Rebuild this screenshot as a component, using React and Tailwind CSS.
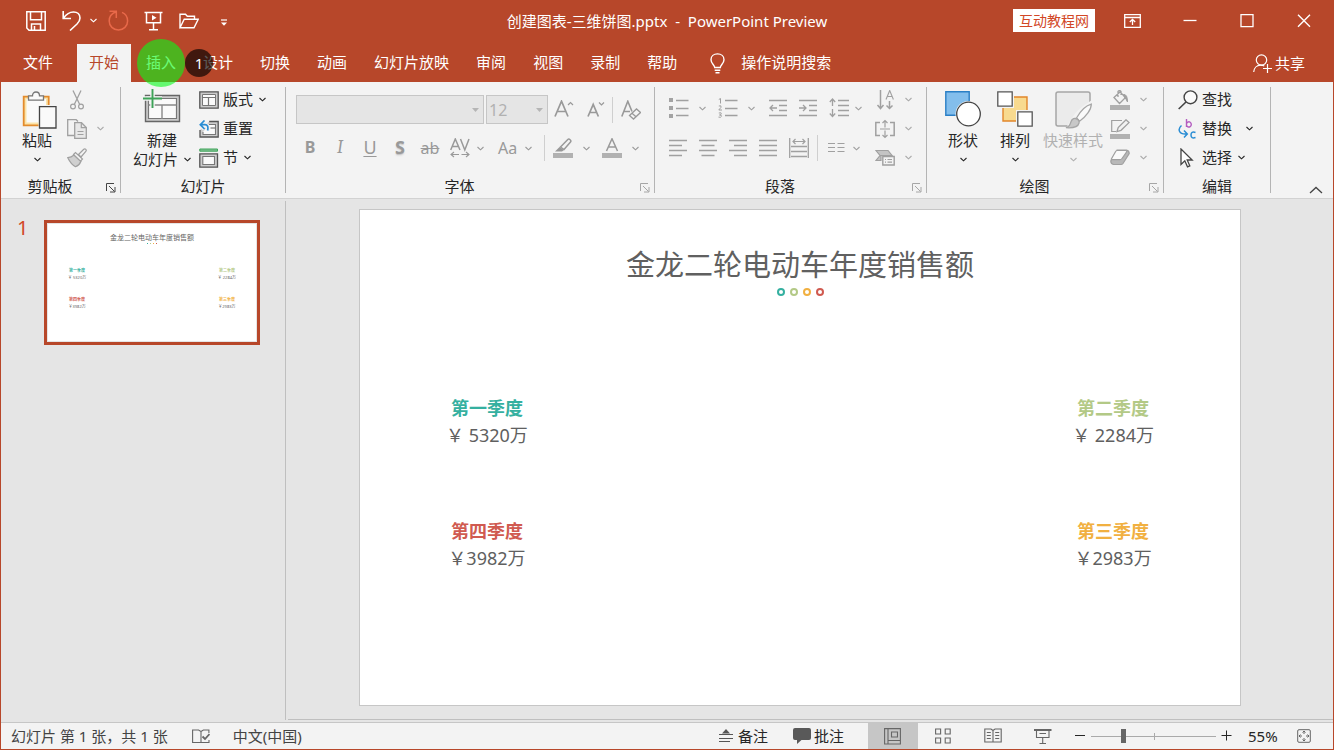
import React, { useState } from 'react'

const Svg = ({ w, h, className = '', children }) => (
  <svg
    width={w}
    height={h}
    viewBox={`0 0 ${w} ${h}`}
    fill="none"
    stroke="currentColor"
    aria-hidden="true"
    className={`shrink-0 ${className}`}
  >
    {children}
  </svg>
)

const Chevron = ({ className = '' }) => (
  <Svg w={7} h={5} className={className}>
    <path d="M.5 1 3.500 3.800 6.500 1" strokeWidth="1.1" />
  </Svg>
)

// quick access toolbar
const SaveIcon = () => (
  <Svg w={20} h={20}>
    <path d="M.8.8h18.4v18.4H3L.8 17zM4.5.8v8h11v-8M5.500 19v-6h9v6M8.500 19v-4" strokeWidth="1.5" />
  </Svg>
)
const UndoIcon = () => (
  <Svg w={19} h={21}>
    <path d="M1.2 1v7.500H9M1.500 8.200C4 4.500 7.500 2 11.500 2c4 0 6.500 2.500 6.500 6 0 2.500-1 4-3 6l-7 6.500" strokeWidth="1.6" />
  </Svg>
)
const RedoIcon = () => (
  <Svg w={21} h={21} className="text-[#e8694a]">
    <path d="M1.500 1.200h6.800v6.800M8 1.800C4 3.300 1.200 6.500 1.200 11c0 5 4 9 9.200 9s9.200-4 9.200-9c0-4-2.200-7.200-5.600-8.600" strokeWidth="1.5" />
  </Svg>
)
const ShowIcon = () => (
  <Svg w={19} h={20}>
    <path d="M.5 1.500h18M2.500 1.500v10.300h14V1.500M9.500 12v6.500M5 18.700h9" strokeWidth="1.5" />
    <path d="M8 4v5.500l4.500-2.700z" fill="currentColor" stroke="none" />
  </Svg>
)
const OpenIcon = () => (
  <Svg w={20} h={16}>
    <path d="M1 14.500V1.200h5.500l1.800 2h7.200v3M1 14.800 5.200 6.200h14L15 14.800z" strokeWidth="1.4" />
  </Svg>
)
const CustomizeIcon = () => (
  <Svg w={6} h={7}>
    <path d="M0 1h6" strokeWidth="1.2" />
    <path d="M0 3.500h6L3 6.700z" fill="currentColor" stroke="none" />
  </Svg>
)

// window controls
const RibbonDisplayIcon = () => (
  <Svg w={17} h={14}>
    <path d="M.7.7h15.600v12.600H.7zM.7 3.500h15.600M8.500 11V5.500M5.800 8l2.700-2.700L11.200 8" strokeWidth="1.3" />
  </Svg>
)
const MinimizeIcon = () => <Svg w={14} h={14}><path d="M.5 6.500h13" strokeWidth="1.3" /></Svg>
const MaximizeIcon = () => <Svg w={14} h={14}><path d="M1 .7h12v12H1z" strokeWidth="1.3" /></Svg>
const CloseIcon = () => <Svg w={14} h={14}><path d="m1 .7 12 12M13 .7l-12 12" strokeWidth="1.400" /></Svg>
const BulbIcon = () => (
  <Svg w={15} h={21}>
    <path d="M4.700 14.500c0-2.500-3.700-4-3.700-7.800C1 3.300 3.800.9 7.500.9S14 3.300 14 6.700c0 3.800-3.700 5.300-3.700 7.800zM4.700 17.200h5.600M5.500 19.700h4" strokeWidth="1.400" />
  </Svg>
)
const ShareIcon = () => (
  <Svg w={19} h={19}>
    <circle cx="8.500" cy="6" r="5.200" strokeWidth="1.200" />
    <path d="M.7 18c.3-4 3-6.800 7-6.800 1.500 0 2.600.3 3.600.8M14.500 10v9M10 14.500h9" strokeWidth="1.200" />
  </Svg>
)

// ribbon icons
const PasteIcon = () => (
  <Svg w={36} h={38}>
    <path d="M1.700 5.700h25v28.600h-25z" fill="#fbe3a8" stroke="#e38b2c" strokeWidth="1.800" />
    <path d="M4.500 8h19.500v23.500H4.500z" fill="#fafafa" stroke="none" />
    <path d="M6.500 9.200V4.800h4C10.500 2.300 12 1 14 1s3.500 1.300 3.500 3.800h4v4.400z" fill="#fafafa" stroke="#777" strokeWidth="1.300" />
    <path d="M16.500 14h19v24h-19z" fill="#f3f3f3" stroke="none" />
    <path d="M17.500 15.700h16.500v21.300H17.500z" fill="#fafafa" stroke="#444" strokeWidth="1.300" />
  </Svg>
)
const CutIcon = () => (
  <Svg w={20} h={20}>
    <path d="M6 .5 12.700 14.500M14 .5 7.300 14.500" strokeWidth="1.300" />
    <circle cx="6" cy="16.500" r="2.400" strokeWidth="1.200" />
    <circle cx="14" cy="16.500" r="2.400" strokeWidth="1.200" />
  </Svg>
)
const CopyIcon = () => (
  <Svg w={20} h={20}>
    <path d="M7 16.500H.7V.7h8.500L11 2.500" strokeWidth="1.300" />
    <path d="M7.700 3.700h6.800l4.800 4.800v10.800H7.700z" fill="#e8e8e8" strokeWidth="1.300" />
    <path d="M14.300 3.700v5h5M10.500 12.500h6M10.500 15.500h6" strokeWidth="1.200" />
  </Svg>
)
const BrushIcon = () => (
  <Svg w={20} h={20}>
    <path d="M7 7C5 8.800 3 9.500.8 9.700c2 4.300 5 7.500 7.700 9 2.800-1 4.500-3 5.500-5.500z" fill="#d0d0d0" strokeWidth="1.200" />
    <path d="m6.500 6.500 2-2 7 6.500-2 2.200z" fill="#f3f3f3" strokeWidth="1.200" />
    <path d="m11.500 6.500 5.300-5.200q1-1 2 0t0 2L14 9z" fill="#f3f3f3" strokeWidth="1.200" />
  </Svg>
)
const NewSlideIcon = () => (
  <Svg w={40} h={36}>
    <path d="M3.500 7.500h34v26h-34z" fill="#ccc" stroke="#666" strokeWidth="1.400" />
    <path d="M6.500 10.500h28v20h-28z" fill="#fafafa" stroke="#777" strokeWidth="1.200" />
    <path d="M6.500 17h28M20 17v14" stroke="#888" strokeWidth="1.400" />
    <path d="M10.500 1v19M1 10.500h19" stroke="#f3f3f3" strokeWidth="4.500" />
    <path d="M10.500 1v19M1 10.500h19" stroke="#3ea358" strokeWidth="1.900" />
  </Svg>
)
const LayoutIcon = () => (
  <Svg w={20} h={18} className="text-[#555]">
    <path d="M.8.8h18.400v16.400H.8z" fill="#ccc" strokeWidth="1.300" />
    <path d="M3.500 3.500h13v11h-13z" fill="#fafafa" stroke="#777" strokeWidth="1" />
    <path d="M3.500 6.500h13M9.500 6.500v8" stroke="#777" strokeWidth="1.200" />
  </Svg>
)
const ResetIcon = () => (
  <Svg w={20} h={18} className="text-[#555]">
    <path d="M1 10v7h18.200V1.500h-9" fill="#ccc" strokeWidth="1.300" />
    <path d="M4 12v2.500h12.500V4.500H10" fill="#fafafa" stroke="#777" strokeWidth="1.100" />
    <path d="M11.500 8h5" stroke="#777" strokeWidth="1.200" />
    <path d="M5.500.5 1.300 4.700 5.500 9M1.500 4.700H6c2.500 0 3.500 2 2.600 5.800" stroke="#f3f3f3" strokeWidth="4" />
    <path d="M5.500.5 1.300 4.700 5.500 9M1.500 4.700H6c2.500 0 3.500 2 2.600 5.800" stroke="#2a8dd4" strokeWidth="1.700" />
  </Svg>
)
const SectionIcon = () => (
  <Svg w={20} h={20} className="text-[#555]">
    <path d="M.8 1h17.700v2.200H.8z" fill="#7fc392" stroke="#3ea358" strokeWidth="1" />
    <path d="M.8 5.800h17.700v13.400H.8z" fill="#ccc" strokeWidth="1.300" />
    <path d="M3.800 8.500h11.700v8H3.800z" fill="#fafafa" stroke="#777" strokeWidth="1.100" />
  </Svg>
)

const GrowFontIcon = () => (
  <Svg w={20} h={20}>
    <path d="M1 16.500 7.500 1.200 14 16.500M3.300 11.500h8.400" strokeWidth="1.700" />
    <path d="m14 5 2.500-2.500L19 5" strokeWidth="1.200" />
  </Svg>
)
const ShrinkFontIcon = () => (
  <Svg w={20} h={20}>
    <path d="M2 16.500 7.200 4.500l5.200 12M4 12.500h6.500" strokeWidth="1.700" />
    <path d="m13 2.500 2.500 2.500L18 2.500" strokeWidth="1.200" />
  </Svg>
)
const ClearFormatIcon = () => (
  <Svg w={20} h={20}>
    <path d="M.8 16.500 6.800 1.300 11 11.500M3 11.500h6" strokeWidth="1.600" />
    <path d="m8.500 15.500 7-6.500 4 3.500-7 6.500zM11 13.200l4 3.500" fill="#f3f3f3" strokeWidth="1.300" />
  </Svg>
)
const SpacingIcon = () => (
  <Svg w={20} h={20}>
    <path d="m.7 12 4.600-11L10 12M2.300 8.500h6M10.500 1l4.300 11L19 1" strokeWidth="1.500" />
    <path d="M1 16.500h8M11.500 16.500H19M4 14 1 16.500 4 19M16 14l3 2.500-3 2.500" strokeWidth="1.100" />
  </Svg>
)
const HighlightIcon = () => (
  <Svg w={20} h={20}>
    <path d="m7.500 9 7.300-7.500c1.300-1.300 4 1 2.700 2.500L11 11.500z" strokeWidth="1.500" />
    <path d="M2 13.500 6.500 9l4.500 3-2 1.500z" fill="currentColor" stroke="none" />
    <path d="M0 15h20v5H0z" fill="#b1b1b1" stroke="none" />
  </Svg>
)
const FontColorIcon = () => (
  <Svg w={20} h={20}>
    <path d="M4.500 13 10 .8 15.500 13M6.300 9h7.400" strokeWidth="1.500" />
    <path d="M0 15h20v5H0z" fill="#b1b1b1" stroke="none" />
  </Svg>
)

const BulletsIcon = () => (
  <Svg w={20} h={20}>
    <path d="M0 0h4v4H0zM0 8h4v4H0zM0 16h4v4H0z" fill="#a3a3a3" stroke="none" />
    <path d="M7 2.500h12.500M7 10.500h12.500M7 17.500h12.500" strokeWidth="1.400" />
  </Svg>
)
const NumberingIcon = () => (
  <Svg w={20} h={20}>
    <path d="M.8 1.500 2.500.5v5M.8 8q3-1 2.200 1.300L.8 12H4M.8 15q3-.8 2.500.8Q3 17 1.500 17q2.300 0 2 1.300-.5 1.500-3 .8" strokeWidth="1" />
    <path d="M7 2.500h12.500M7 10.500h12.500M7 17.500h12.500" strokeWidth="1.400" />
  </Svg>
)
const OutdentIcon = () => (
  <Svg w={18} h={18}>
    <path d="M0 1.500h18M10 6.500h8M10 11.500h8M0 16.500h18" strokeWidth="1.500" />
    <path d="M8 9H1M4 6 1 9l3 3" strokeWidth="1.300" />
  </Svg>
)
const IndentIcon = () => (
  <Svg w={18} h={18}>
    <path d="M0 1.500h18M10 6.500h8M10 11.500h8M0 16.500h18" strokeWidth="1.500" />
    <path d="M0 9h7M4 6l3 3-3 3" strokeWidth="1.300" />
  </Svg>
)
const LineSpacingIcon = () => (
  <Svg w={20} h={20}>
    <path d="M3.500 1v7M3.500 11v7.500M.8 4l2.700-3L6.200 4M.8 15.500l2.700 3 2.700-3" strokeWidth="1.300" />
    <path d="M9 2.500h11M9 7.500h11M9 12.500h11M9 17.500h11" strokeWidth="1.500" />
  </Svg>
)
const AlignLeftIcon = () => <Svg w={18} h={18}><path d="M0 1.500h18M0 6.500h13M0 11.500h18M0 16.500h13" strokeWidth="1.500" /></Svg>
const AlignCenterIcon = () => <Svg w={18} h={18}><path d="M0 1.500h18M2.500 6.500h13M0 11.500h18M2.500 16.500h13" strokeWidth="1.500" /></Svg>
const AlignRightIcon = () => <Svg w={18} h={18}><path d="M0 1.500h18M5 6.500h13M0 11.500h18M5 16.500h13" strokeWidth="1.500" /></Svg>
const JustifyIcon = () => <Svg w={18} h={18}><path d="M0 1.500h18M0 6.500h18M0 11.500h18M0 16.500h18" strokeWidth="1.500" /></Svg>
const DistributeIcon = () => (
  <Svg w={20} h={20}>
    <path d="M.7 0v20M19.300 0v20" strokeWidth="1.300" />
    <path d="M4 3.500h12M6.500 1 4 3.500 6.500 6M13.500 1 16 3.500 13.500 6" strokeWidth="1.200" />
    <path d="M2 8.500h16M2 13.500h16M2 18.500h16" strokeWidth="1.500" />
  </Svg>
)
const ColumnsIcon = () => (
  <Svg w={17} h={12}>
    <path d="M0 1.500h7M9.500 1.500h7M0 5.500h7M9.500 5.500h7M0 9.500h7M9.500 9.500h7" strokeWidth="1.200" />
  </Svg>
)
const TextDirectionIcon = () => (
  <Svg w={20} h={20}>
    <path d="M5.500 0v18M2.500 15l3 3.500 3-3.500M14.500 11v7.500M11.500 15.500l3 3 3-3" strokeWidth="1.500" />
    <path d="m11 9.500 3.700-9 3.700 9M12.300 6.500h4.800" strokeWidth="1.100" />
  </Svg>
)
const AlignTextIcon = () => (
  <Svg w={20} h={20}>
    <path d="M5 3.500H.8v13H5M15 3.500h4.200v13H15" strokeWidth="1.500" />
    <path d="M5 10h10M10 8.500V1.500M10 11.500v7M7.500 4 10 1.500 12.500 4M7.500 16l2.500 2.500 2.500-2.500" strokeWidth="1.200" />
  </Svg>
)
const SmartArtIcon = () => (
  <Svg w={20} h={17}>
    <path d="M1 1.500h12l4 5H6v5H1l4-5z" fill="#c4c4c4" strokeWidth="1.200" />
    <path d="M7.800 7.500h11.400v8.500H7.800z" fill="#f3f3f3" strokeWidth="1.400" />
    <path d="M10 10.500h1M12.500 10.500H17M10 13.200h1M12.500 13.200H17" strokeWidth="1.200" />
  </Svg>
)

const ShapesIcon = () => (
  <Svg w={36} h={36}>
    <path d="M.8.8h23.400v23.400H.8z" fill="#83beec" stroke="#2a7fc5" strokeWidth="1.400" />
    <circle cx="23.500" cy="23" r="13" fill="#f3f3f3" stroke="none" />
    <circle cx="23.500" cy="23" r="11.800" fill="#fff" stroke="#444" strokeWidth="1.300" />
  </Svg>
)
const ArrangeIcon = () => (
  <Svg w={36} h={36}>
    <path d="M6 6h24v24H6z" fill="#f8da8f" stroke="#e2862a" strokeWidth="1.400" />
    <path d="M0 0h17v17H0zM19 19h17v17H19z" fill="#f3f3f3" stroke="none" />
    <path d="M.8.8h14.400v14.400H.8zM20.800 20.800h14.400v14.400H20.800z" fill="#fff" stroke="#555" strokeWidth="1.300" />
  </Svg>
)
const QuickStyleIcon = () => (
  <Svg w={38} h={38} className="text-[#a6a6a6]">
    <path d="M4 1h30q2 0 2 2v30q0 2-2 2H4q-2 0-2-2V3q0-2 2-2z" fill="#ebebeb" strokeWidth="1.500" />
    <path d="M20 24C25 17 31 14 38 9v28H12z" fill="#f3f3f3" stroke="none" />
    <path d="M22.500 27C26 21 32 14.500 37.300 13.200c0 5.300-5 12.300-11.800 17z" fill="#fafafa" strokeWidth="1.300" />
    <path d="M21.500 27.500c2.500.5 4 2 3.500 4.500-.8 3.500-4.500 5.300-13 4.700 3.500-1.500 4-3 5-6 .8-2.200 2.500-3.500 4.500-3.200z" fill="#c8c8c8" strokeWidth="1.300" />
  </Svg>
)
const FillIcon = () => (
  <Svg w={20} h={20}>
    <path d="M4 7.500 10 2l5.500 5.500-6 6zM8 7V1.500q1.500-1.800 3 0V5" strokeWidth="1.300" />
    <path d="M13.500 4.500q4-.5 4 7.500-1.500-3.500-3-4.500z" fill="currentColor" strokeWidth="1" />
    <path d="M0 15h20v5H0z" fill="#b1b1b1" stroke="none" />
  </Svg>
)
const OutlineIcon = () => (
  <Svg w={20} h={20}>
    <path d="M12 1.500H1.700v11H6" strokeWidth="1.200" />
    <path d="m7 12.500 1.200-4L16 .8l3 2.800-8 7.700z" strokeWidth="1.300" />
    <path d="M0 15h20v5H0z" fill="#b1b1b1" stroke="none" />
  </Svg>
)
const EffectsIcon = () => (
  <Svg w={20} h={17}>
    <path d="M7 1.200h9.500q2.700.5 2.700 3.300L13 14.500q-.8 1-2 1H3.500Q.8 15 .8 12z" fill="#b8b8b8" strokeWidth="1.200" />
    <path d="M7 1.500h8.500q2 0 1 1.700L12 9.500q-.8 1.200-2 1.200H2q-1 0-.5-1l4-7q.7-1.200 1.500-1.200z" fill="#fafafa" strokeWidth="1.200" />
  </Svg>
)
const FindIcon = () => (
  <Svg w={20} h={20} className="text-[#444]">
    <circle cx="12.500" cy="7.300" r="6.400" fill="#fafafa" strokeWidth="1.400" />
    <path d="m8 12-7.300 7" strokeWidth="1.600" />
  </Svg>
)
const ReplaceIcon = () => (
  <Svg w={20} h={20}>
    <path d="M8.500 0v8M8.500 5.200a2.400 2.600 0 1 1 0 .5" stroke="#b45cc0" strokeWidth="1.400" />
    <path d="M17.500 13.500q-4.500-1.500-4.500 2.500t4.500 2.500" stroke="#2a8dd4" strokeWidth="1.500" />
    <path d="M3.500 6.500C-.5 10 .5 15.500 8.500 15M6 11.500 9.300 15 6 18.500" stroke="#2a8dd4" strokeWidth="1.500" />
  </Svg>
)
const SelectIcon = () => (
  <Svg w={20} h={20} className="text-[#444]">
    <path d="M3 1v15.500l3.800-3.700 2.700 6 2.300-1-2.600-5.800h5z" fill="#fff" strokeWidth="1.300" />
  </Svg>
)
const LauncherIcon = () => (
  <Svg w={10} h={10}>
    <path d="M.5 8V.5H8M3 3l5.500 5.500M9 4v5H4" strokeWidth="1" />
  </Svg>
)

// status bar
const SpellIcon = () => (
  <Svg w={18} h={15} className="text-[#666]">
    <path d="M9 13.500H.6V1h6L9 2.500v11zM9 2.500 11.400 1h5.500v3M17 11v2.500H9" strokeWidth="1.100" />
    <path d="m10.500 7.500 2.500 2.500 4.500-5" strokeWidth="1.800" />
  </Svg>
)
const NotesIcon = () => (
  <Svg w={14} h={14} className="text-[#555]">
    <path d="M3 4.500 7 0l4 4.500z" fill="currentColor" stroke="none" />
    <path d="M0 5.500h11M2 5.500h12M0 9.500h14M0 12.500h11" strokeWidth="1.200" />
  </Svg>
)
const CommentIcon = () => (
  <Svg w={18} h={16}>
    <path d="M2 0h14q2 0 2 2v8q0 2-2 2H8.500L4 16v-4H2q-2 0-2-2V2q0-2 2-2z" fill="#595959" stroke="none" />
  </Svg>
)
const NormalViewIcon = () => (
  <Svg w={18} h={17}>
    <path d="M.6.6h15.800v15.400H.6zM4 .6v15.400M4 12.500h12.400M7.500 4h6v5h-6z" strokeWidth="1.100" />
  </Svg>
)
const SorterIcon = () => (
  <Svg w={17} h={16}>
    <path d="M.6 1h5v5h-5zM10.200 1h5v5h-5zM.6 10h5v5h-5zM10.200 10h5v5h-5z" strokeWidth="1.100" />
  </Svg>
)
const ReadingIcon = () => (
  <Svg w={18} h={16}>
    <path d="M9 14H.8V1H7l2 1.500L11 1h6.200v13H9V2.500" strokeWidth="1.100" />
    <path d="M2.800 4.500h4M2.800 7.500h4M2.800 10.500h4M11.200 4.500h4M11.200 7.500h4M11.200 10.500h4" strokeWidth="1.200" />
  </Svg>
)
const SlideShowIcon = () => (
  <Svg w={18} h={17}>
    <path d="M0 2h17.500" strokeWidth="2" />
    <path d="M2.500 2v7.500h12.500V2M5.500 5.500h6.500M8.700 9.500v6M5.500 15.500h6.500" strokeWidth="1.100" />
  </Svg>
)
const FitIcon = () => (
  <Svg w={14} h={14} className="text-[#666]">
    <path d="M2 .7h10q1.300 0 1.300 1.300v10q0 1.300-1.300 1.300H2Q.7 13.300.7 12V2Q.7.7 2 .7z" strokeWidth="1" />
    <path d="M7 2v3M5.500 3.500 7 2l1.500 1.500M7 12V9M5.500 10.500 7 12l1.500-1.500M2 7h3M3.500 5.500 2 7l1.500 1.500M12 7H9M10.500 5.500 12 7l-1.500 1.500" strokeWidth="1" />
  </Svg>
)

const tabs = ['开始', '插入', '设计', '切换', '动画', '幻灯片放映', '审阅', '视图', '录制', '帮助']

// \uffe5 is the full-width yen sign
const quarters = [
  { name: '第一季度', value: '\uffe5 5320万', color: 'text-[#35b0a0]' },
  { name: '第二季度', value: '\uffe5 2284万', color: 'text-[#b3c986]' },
  { name: '第四季度', value: '\uffe53982万', color: 'text-[#d05a50]' },
  { name: '第三季度', value: '\uffe52983万', color: 'text-[#f1b041]' },
]

const dots = ['border-[#35b0a0]', 'border-[#b3c986]', 'border-[#f1b041]', 'border-[#d05a50]']

const Separator = () => <div className="h-[106px] w-px shrink-0 self-center bg-[#b4b4b4]" />
const SmallSeparator = () => <div className="h-[26px] w-px shrink-0 bg-[#cfcfcf]" />

const Group = ({ title, className, launcher, children }) => (
  <section className={`flex shrink-0 flex-col pt-[3px] ${className}`}>
    <div className="flex h-[87px]">{children}</div>
    <div className="flex flex-1 items-center pt-0.5">
      <div className="flex-1 text-center leading-5">{title}</div>
      {launcher && (
        <button aria-label={`${title}设置`} className={`ml-[7px] mr-1 pt-1 ${launcher}`}>
          <LauncherIcon />
        </button>
      )}
    </div>
  </section>
)

const BigButton = ({ icon, label, className = '', iconClass = '' }) => (
  <button className={`flex flex-col items-center whitespace-nowrap pt-[6px] ${className}`}>
    <span className={`flex h-[38px] items-start ${iconClass}`}>{icon}</span>
    <span className="mt-px leading-5">{label}</span>
    <Chevron className="mt-[7px]" />
  </button>
)

const RowButton = ({ icon, label, menu, className = '' }) => (
  <button className={`flex h-[29px] items-center whitespace-nowrap ${className}`}>
    <span className="flex w-6 items-center">{icon}</span>
    <span className="pb-0.5">{label}</span>
    {menu && <Chevron className={menu} />}
  </button>
)

const Tool = ({ label, className = '', menu, children }) => (
  <button disabled aria-label={label} className={`flex h-7 shrink-0 items-center ${className}`}>
    {children}
    {menu && <Chevron />}
  </button>
)

const StackTool = ({ label, menu = true, children }) => (
  <button disabled aria-label={label} className="flex h-[29px] items-center gap-[10px]">
    <span className="flex w-5 justify-center">{children}</span>
    {menu && <Chevron className="text-[#aaa]" />}
  </button>
)

const Combo = ({ label, value, className }) => (
  <div className={`relative ${className}`}>
    <select
      disabled
      aria-label={label}
      defaultValue={value}
      className="h-[29px] w-full appearance-none border border-[#c6c6c6] bg-[#e5e5e5] pl-[2px] text-base text-[#b1b1b1] opacity-100"
    >
      <option value={value}>{value}</option>
    </select>
    <Svg w={7} h={4} className="pointer-events-none absolute right-[5px] top-[13px] text-[#b5b5b5]">
      <path d="M0 0h7L3.500 4z" fill="currentColor" stroke="none" />
    </Svg>
  </div>
)

const TitleBar = () => (
  <header className="grid h-[44px] grid-cols-[1fr_auto_1fr] items-center pb-[3px]">
    <div className="flex items-center pl-[25px]">
      <button aria-label="保存"><SaveIcon /></button>
      <button aria-label="撤消" className="ml-4 flex items-center gap-[9px]"><UndoIcon /><Chevron /></button>
      <button aria-label="重复" className="ml-[11px]"><RedoIcon /></button>
      <button aria-label="从头开始" className="ml-[15px]"><ShowIcon /></button>
      <button aria-label="打开" className="ml-4"><OpenIcon /></button>
      <button aria-label="自定义快速访问工具栏" className="ml-[22px] pt-1"><CustomizeIcon /></button>
    </div>
    <h1 className="whitespace-pre">{'创建图表-三维饼图.pptx  -  PowerPoint Preview'}</h1>
    <div className="flex items-center justify-end pr-[22px]">
      <a href="#site" className="mr-[29px] h-[23px] bg-white px-[6px] text-sm leading-[23px] text-[#d24726]">互动教程网</a>
      <button aria-label="功能区显示选项" className="mr-[42px]"><RibbonDisplayIcon /></button>
      <button aria-label="最小化" className="mr-[43px]"><MinimizeIcon /></button>
      <button aria-label="最大化" className="mr-[43px]"><MaximizeIcon /></button>
      <button aria-label="关闭"><CloseIcon /></button>
    </div>
  </header>
)

const TabBar = ({ active, onSelect }) => (
  <nav className="flex h-[38px] items-stretch whitespace-nowrap">
    <button className="ml-[10px] mr-3 px-3 pb-0.5">文件</button>
    <div className="flex gap-[3px]">
      {tabs.map(tab => (
        <button
          key={tab}
          onClick={() => onSelect(tab)}
          className={`relative px-3 pb-0.5 ${tab === active ? 'bg-[#f3f3f3] text-[#b7472a]' : ''}`}
        >
          {tab}
          {tab === '插入' && (
            <>
              <span className="absolute -top-[5px] left-[3px] z-10 size-12 rounded-full bg-[#06fb19]/60" />
              <span className="absolute left-[51px] top-[5px] z-10 size-7 rounded-full bg-black/65 text-center leading-7">1</span>
            </>
          )}
        </button>
      ))}
    </div>
    <button className="ml-[21px] flex items-center gap-4"><BulbIcon /><span className="pb-0.5">操作说明搜索</span></button>
    <button className="ml-auto mr-7 flex items-center gap-[3px]"><ShareIcon />共享</button>
  </nav>
)

const Ribbon = () => (
  <div className="flex h-[117px] border-b border-[#d2d2d2] bg-[#f3f3f3] text-[#262626]">
    <Group title="剪贴板" className="w-[119px]" launcher="text-[#444]">
      <BigButton className="ml-[18px] w-9" iconClass="self-start pl-[3px]" icon={<PasteIcon />} label="粘贴" />
      <div className="ml-3 flex flex-col text-[#a0a0a0]">
        <StackTool label="剪切" menu={false}><CutIcon /></StackTool>
        <StackTool label="复制"><CopyIcon /></StackTool>
        <StackTool label="格式刷" menu={false}><BrushIcon /></StackTool>
      </div>
    </Group>
    <Separator />
    <Group title="幻灯片" className="w-[164px]">
      <button className="ml-3 flex flex-col items-center whitespace-nowrap pt-[3px]">
        <span className="flex h-[42px] items-start"><NewSlideIcon /></span>
        <span className="leading-5">新建</span>
        <span className="-mt-px flex items-center gap-[6px] leading-5">幻灯片<Chevron /></span>
      </button>
      <div className="ml-2">
        <RowButton icon={<LayoutIcon />} label="版式" menu="ml-[6px]" />
        <RowButton icon={<ResetIcon />} label="重置" />
        <RowButton icon={<SectionIcon />} label="节" menu="ml-[6px]" />
      </div>
    </Group>
    <Separator />
    <Group title="字体" className="w-[368px]" launcher="text-[#a6a6a6]">
      <div className="flex flex-col text-[#999]">
        <div className="flex h-[49px] items-center pl-[10px]">
          <Combo label="字体" value="" className="w-[188px]" />
          <Combo label="字号" value="12" className="ml-0.5 w-[62px]" />
          <Tool label="增大字号" className="ml-[6px]"><GrowFontIcon /></Tool>
          <Tool label="减小字号" className="ml-3 mr-[6px]"><ShrinkFontIcon /></Tool>
          <SmallSeparator />
          <Tool label="清除格式" className="ml-2"><ClearFormatIcon /></Tool>
        </div>
        <div className="flex h-[28px] items-center pl-[9px]">
          <Tool label="加粗" className="w-[30px] justify-center pb-0.5 text-base font-bold">B</Tool>
          <Tool label="倾斜" className="w-[30px] justify-center font-serif text-lg italic">I</Tool>
          <Tool label="下划线" className="w-[30px] justify-center pb-0.5 text-lg underline underline-offset-2">U</Tool>
          <Tool label="阴影" className="w-[30px] justify-center pb-0.5 text-lg font-bold text-shadow-sm">S</Tool>
          <Tool label="删除线" className="w-[30px] justify-center text-base line-through">ab</Tool>
          <Tool label="字符间距" className="ml-[5px] gap-[7px]" menu><SpacingIcon /></Tool>
          <Tool label="更改大小写" className="ml-[14px] mr-3 gap-[6px] text-base" menu>
            <span className="w-[21px] text-left">Aa</span>
          </Tool>
          <SmallSeparator />
          <Tool label="突出显示" className="ml-2 gap-[10px]" menu><HighlightIcon /></Tool>
          <Tool label="字体颜色" className="ml-3 gap-[10px]" menu><FontColorIcon /></Tool>
        </div>
      </div>
    </Group>
    <Separator />
    <Group title="段落" className="w-[271px]" launcher="text-[#a6a6a6]">
      <div className="flex w-[220px] flex-col pl-[14px] text-[#a0a0a0]">
        <div className="flex h-[46px] items-center">
          <Tool label="项目符号" className="gap-[10px]" menu><BulletsIcon /></Tool>
          <Tool label="编号" className="ml-3 gap-[10px]" menu><NumberingIcon /></Tool>
          <Tool label="减少缩进" className="ml-[14px]"><OutdentIcon /></Tool>
          <Tool label="增加缩进" className="ml-3"><IndentIcon /></Tool>
          <Tool label="行距" className="ml-3 gap-[6px]" menu><LineSpacingIcon /></Tool>
        </div>
        <div className="flex h-[34px] items-center gap-3">
          <Tool label="左对齐"><AlignLeftIcon /></Tool>
          <Tool label="居中"><AlignCenterIcon /></Tool>
          <Tool label="右对齐"><AlignRightIcon /></Tool>
          <Tool label="两端对齐"><JustifyIcon /></Tool>
          <Tool label="分散对齐" className="-mr-1"><DistributeIcon /></Tool>
          <SmallSeparator />
          <Tool label="分栏" className="-ml-0.5 gap-2" menu><ColumnsIcon /></Tool>
        </div>
      </div>
      <div className="text-[#a0a0a0]">
        <StackTool label="文字方向"><TextDirectionIcon /></StackTool>
        <StackTool label="对齐文本"><AlignTextIcon /></StackTool>
        <StackTool label="转换为 SmartArt"><SmartArtIcon /></StackTool>
      </div>
    </Group>
    <Separator />
    <Group title="绘图" className="w-[236px]" launcher="text-[#a6a6a6]">
      <BigButton className="ml-[18px]" icon={<ShapesIcon />} label="形状" />
      <BigButton className="ml-4" icon={<ArrangeIcon />} label="排列" />
      <BigButton className="ml-[10px] text-[#b1b1b1]" icon={<QuickStyleIcon />} label="快速样式" />
      <div className="ml-[7px] text-[#a0a0a0]">
        <StackTool label="形状填充"><FillIcon /></StackTool>
        <StackTool label="形状轮廓"><OutlineIcon /></StackTool>
        <StackTool label="形状效果"><EffectsIcon /></StackTool>
      </div>
    </Group>
    <Separator />
    <Group title="编辑" className="w-[106px]">
      <div className="ml-[14px]">
        <RowButton icon={<FindIcon />} label="查找" />
        <RowButton icon={<ReplaceIcon />} label="替换" menu="ml-[14px]" />
        <RowButton icon={<SelectIcon />} label="选择" menu="ml-[6px]" />
      </div>
    </Group>
    <Separator />
    <button aria-label="折叠功能区" className="mb-1 ml-auto mr-[10px] self-end text-[#444]">
      <Svg w={14} h={8}><path d="m1 7 6-5.500L13 7" strokeWidth="1.300" /></Svg>
    </button>
  </div>
)

const Thumbnail = () => (
  <button aria-label="幻灯片 1" className="flex h-[125px] flex-1 flex-col border-[3px] border-[#b7472a] bg-white text-[#666]">
    <span className="flex w-full flex-1 flex-col border border-[#e5e5e5] pt-[9px]">
      <span className="text-[7px] leading-[10px]">金龙二轮电动车年度销售额</span>
      <span className="flex justify-center gap-0.5">
        {dots.map(dot => <span key={dot} className={`border-t border-l ${dot}`} />)}
      </span>
      <span className="grid grid-cols-[auto_auto] justify-between gap-y-[15px] px-[20px] pt-[23px] text-[4px] leading-[7px]">
        {quarters.map(q => (
          <span key={q.name} className="flex flex-col whitespace-nowrap">
            <b className={q.color}>{q.name}</b>
            <span>{q.value}</span>
          </span>
        ))}
      </span>
    </span>
  </button>
)

const Slide = () => (
  <article className="aspect-[882/497] h-full border border-[#c6c6c6] bg-white pt-[35px] text-center text-[#606060]">
    <h2 className="text-[29px] leading-10">金龙二轮电动车年度销售额</h2>
    <div className="mt-[3px] flex justify-center gap-[5px]">
      {dots.map(dot => <span key={dot} className={`size-2 rounded-full border-2 ${dot}`} />)}
    </div>
    <div className="grid grid-cols-[auto_auto] justify-between gap-y-[69px] px-[86px] pt-[99px] text-lg leading-[27px]">
      {quarters.map(q => (
        <div key={q.name}>
          <h3 className={`font-bold ${q.color}`}>{q.name}</h3>
          <p>{q.value}</p>
        </div>
      ))}
    </div>
  </article>
)

const StatusBar = () => {
  const [zoom, setZoom] = useState(55)

  return (
    <footer className="flex h-[27px] shrink-0 items-center whitespace-nowrap border-t border-[#c6c6c6] bg-[#f3f3f3] text-[#444]">
      <span className="ml-[10px]">幻灯片 第 1 张，共 1 张</span>
      <button aria-label="拼写检查" className="ml-6"><SpellIcon /></button>
      <span className="ml-[23px]">中文(中国)</span>
      <div className="ml-auto flex items-center self-stretch text-[#262626]">
        <button className="flex items-center gap-[5px]"><NotesIcon />备注</button>
        <button className="ml-[25px] mr-6 flex items-center gap-[3px]"><CommentIcon />批注</button>
        <div className="flex self-stretch text-[#666] [&>button]:flex [&>button]:w-[50px] [&>button]:items-center [&>button]:justify-center">
          <button aria-label="普通视图" className="bg-[#c6c6c6]"><NormalViewIcon /></button>
          <button aria-label="幻灯片浏览"><SorterIcon /></button>
          <button aria-label="阅读视图"><ReadingIcon /></button>
          <button aria-label="幻灯片放映"><SlideShowIcon /></button>
        </div>
        <button aria-label="缩小" className="ml-[6px]"><Svg w={12} h={12}><path d="M1 5.500h10" strokeWidth="1" /></Svg></button>
        <div className="relative mx-[5px] flex w-[125px] items-center">
          <div className="absolute left-0 top-1/2 h-px w-full bg-[#aaa]" />
          <div className="absolute left-1/2 top-1/2 -mt-[3px] h-[7px] w-px bg-[#aaa]" />
          <input
            type="range"
            aria-label="缩放"
            min="10"
            max="190"
            value={zoom}
            onChange={(e) => setZoom(Number(e.target.value))}
            className="relative h-[14px] w-full appearance-none bg-transparent [&::-webkit-slider-thumb]:h-[14px] [&::-webkit-slider-thumb]:w-[5px] [&::-webkit-slider-thumb]:appearance-none [&::-webkit-slider-thumb]:bg-[#666]"
          />
        </div>
        <button aria-label="放大"><Svg w={12} h={12}><path d="M.5 5.500h10M5.500.5v10" strokeWidth="1" /></Svg></button>
        <span className="ml-[15px] w-[33px]">{zoom}%</span>
        <button aria-label="适应窗口" className="ml-4 mr-[22px]"><FitIcon /></button>
      </div>
    </footer>
  )
}

export default function App() {
  const [tab, setTab] = useState('开始')

  return (
    <div className="flex h-screen flex-col overflow-hidden border border-t-0 border-[#b7472a] bg-[#e5e5e5] font-['Noto_Sans','Noto_Sans_CJK_SC',sans-serif] text-[15px] leading-5">
      <div className="shrink-0 bg-[#b7472a] text-white">
        <TitleBar />
        <TabBar active={tab} onSelect={setTab} />
        <Ribbon />
      </div>
      <main className="flex min-h-0 flex-1">
        <aside className="mb-0.5 mt-0.5 flex w-[285px] shrink-0 items-start border-r border-[#bfbfbf] pl-4 pr-[25px] pt-[19px]">
          <span className="w-[27px] text-xl leading-4 text-[#d24726]">1</span>
          <Thumbnail />
        </aside>
        <div className="mb-0.5 ml-0.5 flex min-w-0 flex-1 justify-center border-b border-[#bfbfbf] pb-[13px] pr-[21px] pt-[10px]">
          <Slide />
        </div>
      </main>
      <StatusBar />
    </div>
  )
}
